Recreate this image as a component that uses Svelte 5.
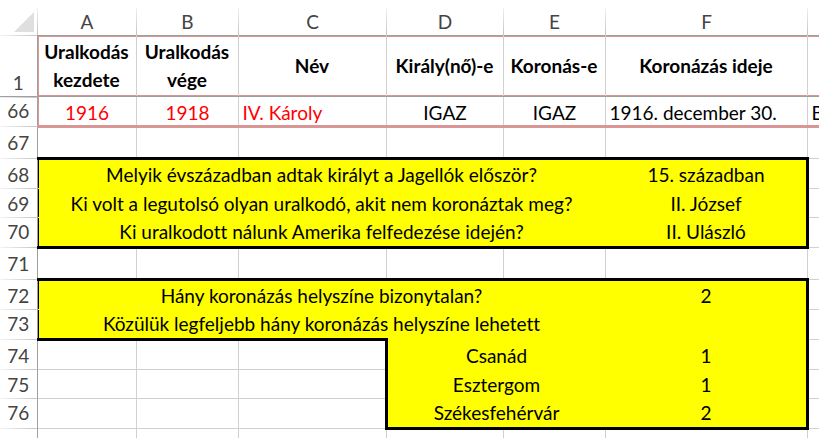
<script>
  const columns = ['A', 'B', 'C', 'D', 'E', 'F'];
  const titles = ['Uralkodás kezdete', 'Uralkodás vége', 'Név', 'Király(nő)-e', 'Koronás-e', 'Koronázás ideje'];
  const questions = [
    { row: 68, text: 'Melyik évszázadban adtak királyt a Jagellók először?', answer: '15. században' },
    { row: 69, text: 'Ki volt a legutolsó olyan uralkodó, akit nem koronáztak meg?', answer: 'II. József' },
    { row: 70, text: 'Ki uralkodott nálunk Amerika felfedezése idején?', answer: 'II. Ulászló' }
  ];
  const counts = [
    { row: 72, text: 'Hány koronázás helyszíne bizonytalan?', answer: '2' },
    { row: 73, text: 'Közülük legfeljebb hány koronázás helyszíne lehetett', answer: '' }
  ];
  const places = [
    { row: 74, name: 'Csanád', count: 1 },
    { row: 75, name: 'Esztergom', count: 1 },
    { row: 76, name: 'Székesfehérvár', count: 2 }
  ];
</script>

{#snippet emptyRow(n)}
  <tr class="blank">
    <th scope="row">{n}</th>
    {#each columns as c (c)}<td></td>{/each}
    <td></td>
  </tr>
{/snippet}

<main>
  <table>
    <colgroup>
      <col class="num" /><col class="a" /><col class="b" /><col class="c" />
      <col class="d" /><col class="e" /><col class="f" /><col />
    </colgroup>
    <thead>
      <tr class="letters">
        <th class="corner" aria-label="Összes kijelölése">
          <svg width="20" height="20" viewBox="0 0 20 20" aria-hidden="true"><path d="M20 0V20H0Z" fill="#dfdfdf" /></svg>
        </th>
        {#each columns as c (c)}<th scope="col">{c}</th>{/each}
        <th></th>
      </tr>
      <tr class="titles">
        <th scope="row">1</th>
        {#each titles as t (t)}<th class="title" scope="col">{t}</th>{/each}
        <th class="title"></th>
      </tr>
    </thead>
    <tbody>
      <tr class="record thick">
        <th scope="row">66</th>
        <td class="red">1916</td>
        <td class="red">1918</td>
        <td class="red left">IV. Károly</td>
        <td>IGAZ</td>
        <td>IGAZ</td>
        <td class="left">1916. december 30.</td>
        <td class="left">B</td>
      </tr>
      {@render emptyRow(67)}
      {#each questions as q, i (q.row)}
        <tr class:top={i === 0} class:bottom={i === 2} class:thick={i === 2}>
          <th scope="row">{q.row}</th>
          <td class="box start" colspan="5">{q.text}</td>
          <td class="box end">{q.answer}</td>
          <td></td>
        </tr>
      {/each}
      {@render emptyRow(71)}
      {#each counts as q, i (q.row)}
        <tr class:top={i === 0} class:thick={i === 1}>
          <th scope="row">{q.row}</th>
          <td class="box start" colspan="5">{q.text}</td>
          <td class="box end">{q.answer}</td>
          <td></td>
        </tr>
      {/each}
      {#each places as p, i (p.row)}
        <tr class:after={i === 0} class:bottom={i === 2} class:thick={i === 2}>
          <th scope="row">{p.row}</th>
          <td></td>
          <td></td>
          <td class="beside"></td>
          <td class="box" colspan="2">{p.name}</td>
          <td class="box end">{p.count}</td>
          <td></td>
        </tr>
      {/each}
      <tr class="rest">
        <th scope="row"></th>
        {#each columns as c (c)}<td></td>{/each}
        <td></td>
      </tr>
    </tbody>
  </table>
</main>

<style>
  :global(body) {
    background: #fff;
  }
  main {
    overflow: hidden;
    font-family: Lato, 'Liberation Sans', sans-serif;
    font-size: 19px;
    font-variant-ligatures: none;
    line-height: 24px;
    color: #000;
  }
  table {
    width: 100%;
    table-layout: fixed;
    border-collapse: collapse;
  }
  .num { width: 37px; }
  .a { width: 99px; }
  .b { width: 102px; }
  .c { width: 148px; }
  .d { width: 117px; }
  .e { width: 102px; }
  .f { width: 202px; }

  tr { height: 29px; }
  th,
  td {
    box-sizing: border-box;
    padding: 0 0 1px 1px;
    vertical-align: bottom;
    text-align: center;
    white-space: nowrap;
    font-weight: 400;
  }
  td { border: 1px solid #d0d0d0; }
  th[scope='row'] {
    color: #444;
    padding-left: 0;
    border-right: 1px solid #9f9f9f;
    background: linear-gradient(90deg, #f4f4f4, #c4c4c4) top / 100% 1px no-repeat;
  }
  .thick > th { padding-bottom: 3px; }
  .thick > td { padding-bottom: 2px; }
  .thick { height: 30px; }

  .letters { height: 35px; }
  .letters th {
    color: #444;
    background: linear-gradient(#f0f0f0, #c4c4c4) left bottom / 1px 27px no-repeat;
  }
  .letters .corner {
    padding: 0 3px 3px 0;
    text-align: right;
    line-height: 0;
    background: none;
  }
  .titles { height: 61px; }
  .titles .title {
    padding: 0 4px;
    vertical-align: middle;
    white-space: normal;
    line-height: 28px;
    font-weight: 700;
    border: 1px solid #d0d0d0;
    border-top-color: #9f9f9f;
    border-bottom-color: #9f9f9f;
    box-shadow: inset 0 1px #da9694, inset 0 -1px #da9694;
  }
  .titles th[scope='row'] { border-bottom: 1px solid #9f9f9f; }
  .titles .title:nth-child(2) {
    border-left-color: #9f9f9f;
    box-shadow: inset 1px 0 #da9694, inset 0 1px #da9694, inset 0 -1px #da9694;
  }
  .record td { border-bottom: 3px solid #da9694; border-top-color: #9f9f9f; }
  .record > td { padding-bottom: 0; }
  .record td:nth-child(2) { box-shadow: inset 1px 0 #da9694; }
  td:nth-child(2) { border-left-color: #9f9f9f; }
  .red { color: #f00; }
  td.left { text-align: left; padding-left: 4px; }

  .blank { height: 32px; }
  .blank > th { padding-bottom: 3px; }

  td.box {
    background: #ff0;
    border-color: #ff0;
  }
  td.start {
    border-left-color: #9f9f9f;
    box-shadow: inset 1px 0 #000;
  }
  td.end { border-right: 3px solid #000; }
  .top { height: 30px; }
  .top td.box { border-top: 3px solid #000; }
  .bottom td.box { border-bottom: 3px solid #000; }
  .after { height: 30px; }
  .after td:not(.box):not(:last-child) { border-top: 3px solid #000; }
  td.beside { border-right: 3px solid #000; }
  .rest { height: 10px; }
  .rest td { border-bottom: 0; }
  tr > :last-child,
  .titles .title:last-child { border-right: 0; }
</style>
